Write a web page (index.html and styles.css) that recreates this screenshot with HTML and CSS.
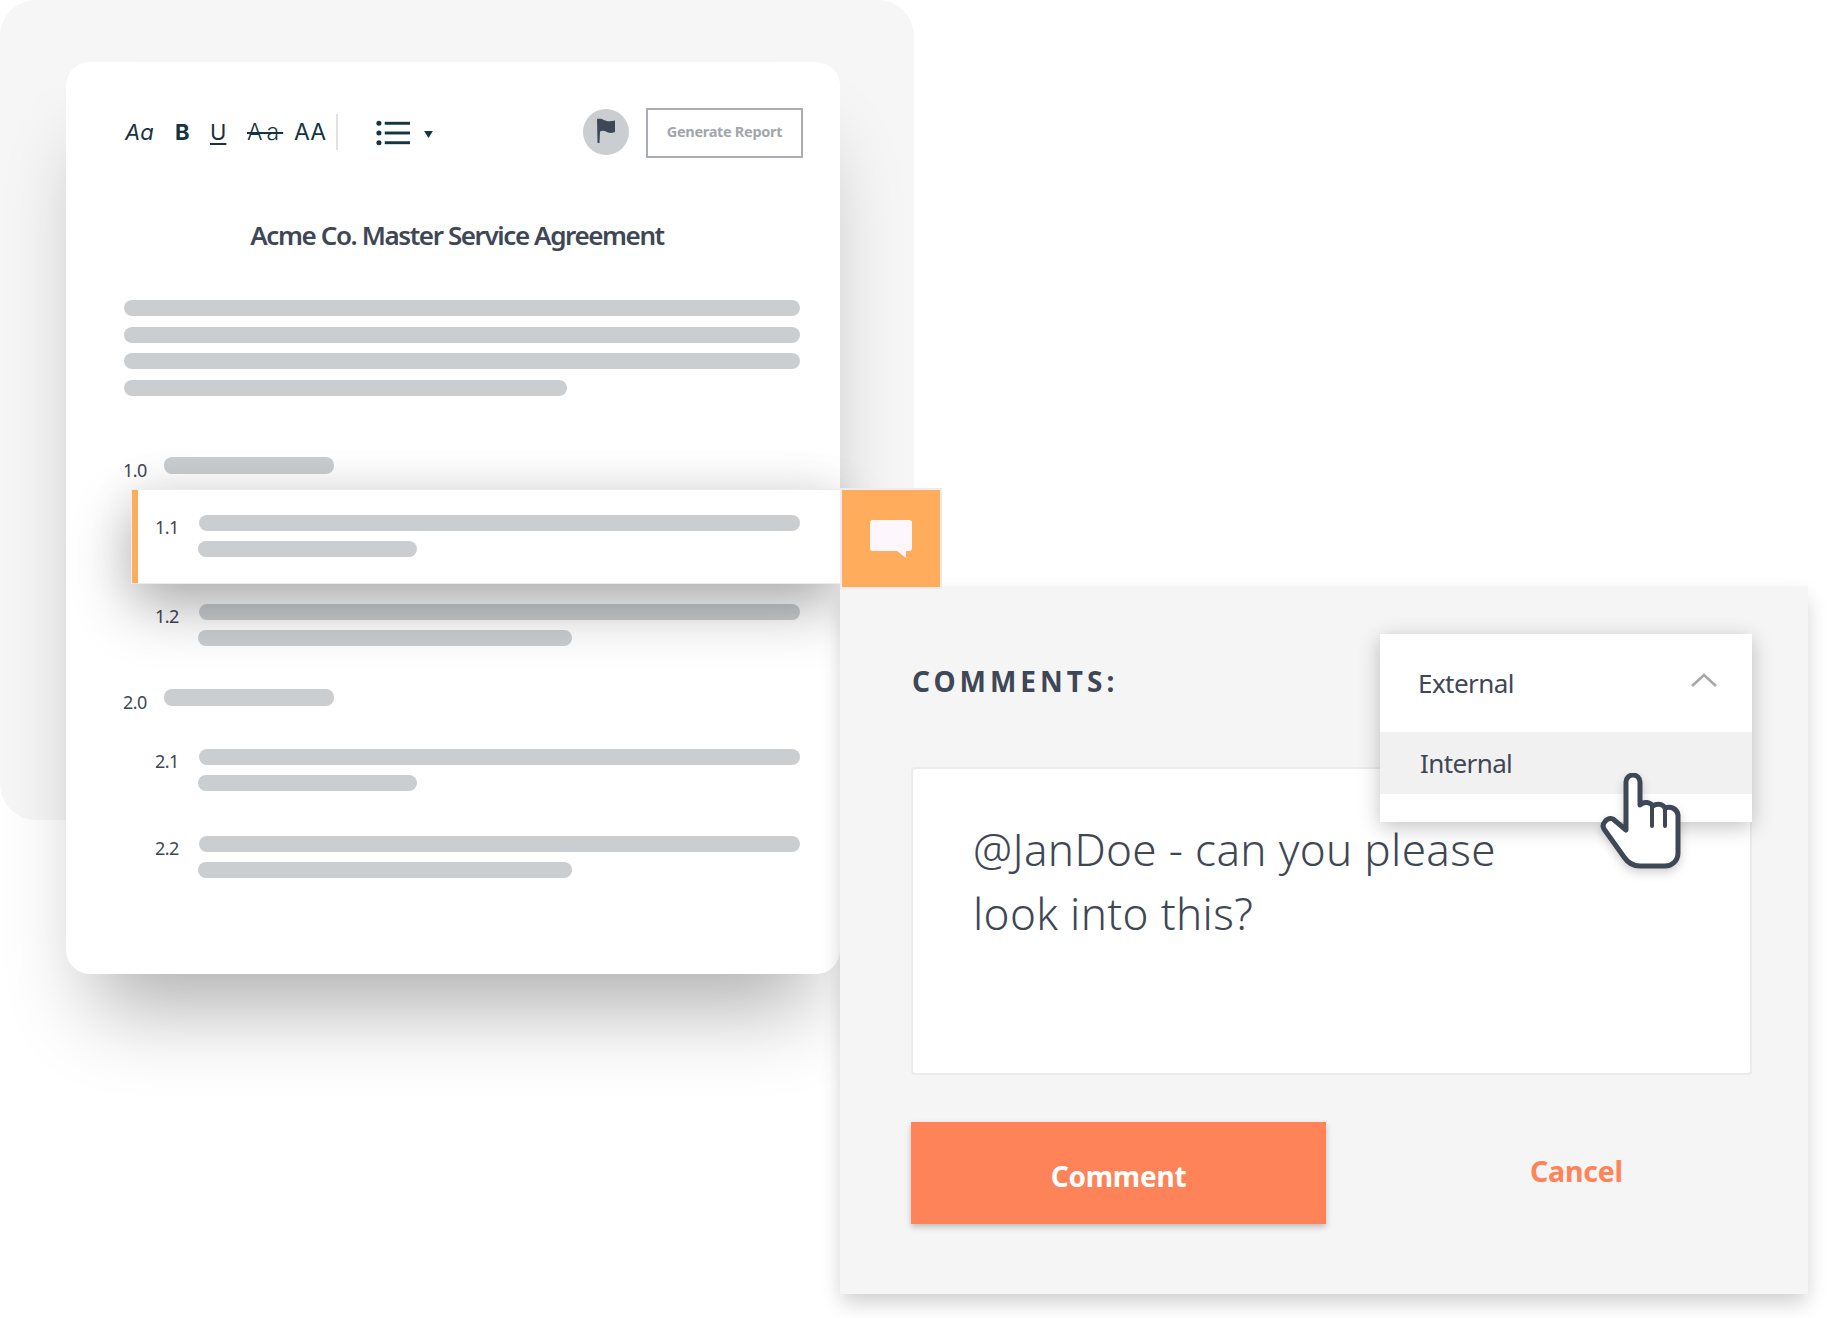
FILE: index.html
```html
<!DOCTYPE html>
<html lang="en">
<head>
<meta charset="utf-8">
<title>Acme Co. Master Service Agreement</title>
<link rel="stylesheet" href="styles.css">
</head>
<body>
<div class="stage">
  <div class="backdrop"></div>
  <section class="doc">
    <div class="toolbar">
      <span class="tool italic">Aa</span>
      <span class="tool bold">B</span>
      <span class="tool under">U</span>
      <span class="tool strike">Aa</span>
      <span class="tool caps">AA</span>
      <span class="divider"></span>
      <svg class="list-icon" viewBox="0 0 36 26"><g fill="#15343f"><circle cx="3" cy="3" r="2.6"/><circle cx="3" cy="13" r="2.6"/><circle cx="3" cy="23" r="2.6"/><rect x="9" y="1.5" width="26" height="3"/><rect x="9" y="11.5" width="26" height="3"/><rect x="9" y="21.5" width="26" height="3"/></g></svg>
      <svg class="caret" viewBox="0 0 10 8"><path d="M0 0h10L5 8z" fill="#15343f"/></svg>
      <span class="flag-btn"><svg viewBox="0 0 20 26"><path d="M1 1c3-.6 5 0 7 1s5 2 11 .5V14c-4 1.500-7 1-9-.5-2-1-4-1-6 0L3.500 25H1.500z" fill="#3e4756"/></svg></span>
      <span class="report">Generate Report</span>
    </div>
    <h1 class="title">Acme Co. Master Service Agreement</h1>
    <div class="para">
      <div class="bar"></div><div class="bar"></div><div class="bar"></div><div class="bar w-short"></div>
    </div>
    <div class="head head-one"><span class="head-num">1.0</span><div class="bar bar-head"></div></div>
    <div class="row row-active">
      <span class="num">1.1</span>
      <div class="lines"><div class="bar"></div><div class="bar w-a"></div></div>
    </div>
    <div class="row row-plain">
      <span class="num">1.2</span>
      <div class="lines"><div class="bar"></div><div class="bar w-b"></div></div>
    </div>
    <div class="head head-two"><span class="head-num">2.0</span><div class="bar bar-head"></div></div>
    <div class="row row-plain row-first">
      <span class="num">2.1</span>
      <div class="lines"><div class="bar"></div><div class="bar w-a"></div></div>
    </div>
    <div class="row row-plain row-last">
      <span class="num">2.2</span>
      <div class="lines"><div class="bar"></div><div class="bar w-b"></div></div>
    </div>
  </section>

  <section class="panel">
    <div class="comment-tab"><svg viewBox="0 0 42 38"><path d="M3 0h36a3 3 0 0 1 3 3v25a3 3 0 0 1-3 3h-3v7L27 31H3a3 3 0 0 1-3-3V3a3 3 0 0 1 3-3z" fill="#fdf7fd"/></svg></div>
    <div class="panel-head"><span class="comments-label">COMMENTS:</span></div>
    <div class="textbox">@JanDoe - can you please<br>look into this?</div>
    <div class="actions">
      <button class="btn-comment">Comment</button>
      <span class="cancel">Cancel</span>
    </div>
    <div class="dropdown">
      <div class="dd-head"><span>External</span><svg class="chev" viewBox="0 0 28 16"><path d="M2 14L14 3l12 11" fill="none" stroke="#a8a8a8" stroke-width="2.6"/></svg></div>
      <div class="dd-item">Internal</div>
    </div>
    <svg class="hand" viewBox="0 0 84 100"><path d="M26 57V9a7 7 0 0 1 14 0v23c4-4 10-3 13 1 4-3 10-2 12 2 5-2 12 0 13 7v38c0 8-6 13-13 13H40c-7 0-12-3-16-9L4 56c-3-5 3-12 9-10z" fill="#fff" stroke="#3e4756" stroke-width="5" stroke-linejoin="round"/><path d="M52 34v19M65 36v17" fill="none" stroke="#3e4756" stroke-width="4" stroke-linecap="round"/></svg>
  </section>
</div>
</body>
</html>
```
FILE: styles.css
```css
* { box-sizing: border-box; }
html, body { margin: 0; padding: 0; background: #fff; }
body { font-family: "Noto Sans", "Open Sans", sans-serif; color: #3e4756; }
.stage { position: relative; width: 1828px; height: 1318px; overflow: hidden; }
.backdrop { position: absolute; left: 0; top: 0; width: 914px; height: 820px; background: #f6f6f6; border-radius: 36px; }

.doc { position: absolute; left: 66px; top: 62px; width: 774px; height: 912px; background: #fff; border-radius: 24px; padding: 46px 40px 0 58px; box-shadow: 0 60px 80px -28px rgba(0,0,0,.32); }

.toolbar { display: flex; align-items: center; height: 50px; margin-right: -4px; color: #15343f; font-family: Inter, "Liberation Sans", sans-serif; }
.tool { font-size: 22px; line-height: 1; margin-bottom: 2px; }
.italic { font-style: italic; width: 51px; padding-left: 1px; }
.bold { font-weight: 700; width: 35px; }
.under { text-decoration: underline; text-underline-offset: 3px; width: 37px; }
.strike { text-decoration: line-through; text-decoration-thickness: 2px; font-size: 23px; font-weight: 300; letter-spacing: 4px; width: 47px; }
.caps { width: 42px; font-size: 23px; }
.divider { width: 2px; height: 36px; background: #dfe1e2; margin-bottom: 2px; }
.list-icon { width: 35px; height: 26px; margin-left: 38px; margin-bottom: 1px; }
.caret { width: 9px; height: 7px; margin-left: 13px; margin-top: 3px; }
.flag-btn { width: 46px; height: 46px; border-radius: 50%; background: #cbced1; margin-left: 150px; margin-bottom: 3px; display: flex; align-items: center; justify-content: center; }
.flag-btn svg { width: 20px; height: 26px; margin-bottom: 1px; }
.report { width: 157px; height: 50px; margin-left: 17px; border: 2px solid #a9adb1; color: #a2a6ab; font: 700 14.500px/43px "Noto Sans", sans-serif; text-align: center; letter-spacing: -.3px; }

.title { margin: 59px 0 0; width: 666px; font-size: 26px; font-weight: 600; line-height: 36px; text-align: center; color: #3e4756; letter-spacing: -1.400px; }

.bar { height: 16px; border-radius: 8px; background: #cbced1; }
.para { margin-top: 47px; display: flex; flex-direction: column; gap: 10.500px; }
.w-short { width: 443px; }
.w-a { width: 219px; margin-left: -1px; }
.w-b { width: 374px; margin-left: -1px; }

.head { display: flex; align-items: flex-start; }
.head-one { margin-top: 61.500px; height: 33px; }
.head-two { margin-top: 43px; height: 60px; }
.head-num { width: 41px; margin-left: -1px; margin-top: 3px; font-size: 18px; line-height: 20px; letter-spacing: -.6px; }
.bar-head { width: 170px; height: 17px; }

.row { display: flex; position: relative; }
.num { font-size: 18px; line-height: 20px; letter-spacing: -.6px; }
.lines { flex: 1; display: flex; flex-direction: column; gap: 10px; }

.row-active { margin: 0 -40px 0 8px; height: 93px; padding: 25px 40px 0 17px; border-left: 6px solid #ffac5c; background: #fff; box-shadow: 0 0 0 1px #ececec, 0 24px 60px rgba(0,0,0,.3), 0 0 50px rgba(0,0,0,.08); z-index: 2; }
.row-active .num { width: 44px; margin-top: 2px; }
.row-plain { margin-left: 31px; }
.row-plain .num { width: 44px; margin-top: 2px; }
.row-active + .row-plain { margin-top: 21px; }
.row-first { margin-top: 0; }
.row-last { margin-top: 45px; }

.panel { position: absolute; left: 840px; top: 586px; width: 968px; height: 708px; background: #f5f5f5; padding: 0 56px 0 71px; box-shadow: 0 10px 20px -2px rgba(0,0,0,.2); z-index: 3; }
.comment-tab { position: absolute; left: 2px; top: -96px; width: 98px; height: 97px; background: #ffac5c; display: flex; align-items: center; justify-content: center; box-shadow: 0 0 0 2px #ececec; }
.comment-tab svg { width: 42px; height: 38px; }
.panel-head { height: 181px; padding: 77px 0 0 1px; }
.comments-label { font-size: 28px; line-height: 36px; font-weight: 700; letter-spacing: 4px; color: #3e4756; }
.textbox { height: 308px; background: #fff; border: 2px solid #ebebeb; border-radius: 4px; padding: 48px 58px 0 60px; font-size: 44px; font-weight: 300; line-height: 64px; letter-spacing: .35px; color: #3e4756; }
.actions { display: flex; align-items: center; margin-top: 47px; }
.btn-comment { width: 415px; height: 102px; border: 0; background: #ff8358; color: #fff; font: 700 28px/1 "Noto Sans", sans-serif; padding-top: 6px; letter-spacing: -.2px; box-shadow: 0 3px 6px rgba(0,0,0,.22); }
.cancel { margin-left: 204px; margin-bottom: 4px; color: #ff8358; font-size: 28.500px; font-weight: 700; letter-spacing: -.2px; }

.dropdown { position: absolute; left: 540px; top: 48px; width: 372px; height: 188px; background: #fff; box-shadow: 0 5px 20px rgba(0,0,0,.24); }
.dd-head { height: 98px; padding: 29px 34px 0 38px; display: flex; justify-content: space-between; align-items: flex-start; font-size: 26px; line-height: 40px; letter-spacing: -.55px; }
.chev { width: 28px; height: 16px; margin-top: 9px; }
.dd-item { height: 62px; background: #f1f1f1; padding-left: 40px; font-size: 26px; line-height: 62px; letter-spacing: -.6px; }
.hand { position: absolute; left: 760px; top: 187px; width: 84px; height: 100px; filter: drop-shadow(0 4px 5px rgba(0,0,0,.18)); }
```
